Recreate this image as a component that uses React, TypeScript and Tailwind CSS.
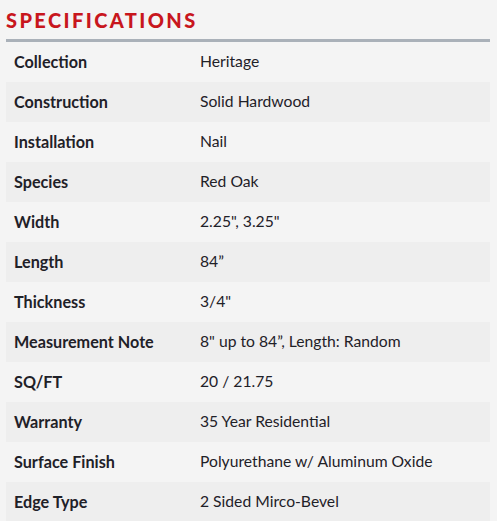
const specs: [string, string][] = [
  ['Collection', 'Heritage'],
  ['Construction', 'Solid Hardwood'],
  ['Installation', 'Nail'],
  ['Species', 'Red Oak'],
  ['Width', '2.25", 3.25"'],
  ['Length', '84\u201d'],
  ['Thickness', '3/4"'],
  ['Measurement Note', '8" up to 84\u201d, Length: Random'],
  ['SQ/FT', '20 / 21.75'],
  ['Warranty', '35 Year Residential'],
  ['Surface Finish', 'Polyurethane w/ Aluminum Oxide'],
  ['Edge Type', '2 Sided Mirco-Bevel'],
];

export default function App() {
  return (
    <div className="min-h-screen bg-[#f4f4f4] px-[6px] pt-[8px] font-['Lato',sans-serif]">
      <h2 className="text-[20px] leading-[24px] font-black uppercase tracking-[2.4px] text-[#c8161d] pb-[7px]">
        Specifications
      </h2>
      <div className="w-[484px] border-t-[3px] border-[#aab1b9]">
        {specs.map(([label, value], i) => (
          <div
            key={label}
            className={`flex h-[40px] items-center text-[#1f2128] ${i % 2 === 1 ? 'bg-[#eeeeee]' : ''}`}
          >
            <div className="w-[194px] pl-[8px] text-[16.2px] font-bold">{label}</div>
            <div className="text-[15.7px]">{value}</div>
          </div>
        ))}
      </div>
    </div>
  );
}
